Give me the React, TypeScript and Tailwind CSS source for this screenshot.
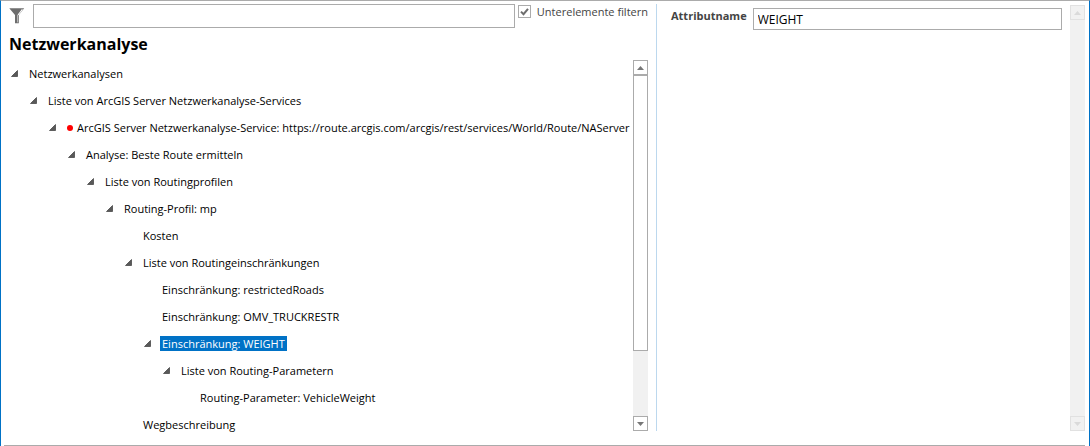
import { useState } from "react";
import clsx from "clsx";

type TreeNode = {
  label: string;
  marked?: boolean;
  children?: TreeNode[];
};

const tree: TreeNode[] = [
  {
    label: "Netzwerkanalysen",
    children: [
      {
        label: "Liste von ArcGIS Server Netzwerkanalyse-Services",
        children: [
          {
            label:
              "ArcGIS Server Netzwerkanalyse-Service: https://route.arcgis.com/arcgis/rest/services/World/Route/NAServer",
            marked: true,
            children: [
              {
                label: "Analyse: Beste Route ermitteln",
                children: [
                  {
                    label: "Liste von Routingprofilen",
                    children: [
                      {
                        label: "Routing-Profil: mp",
                        children: [
                          { label: "Kosten" },
                          {
                            label: "Liste von Routingeinschränkungen",
                            children: [
                              { label: "Einschränkung: restrictedRoads" },
                              { label: "Einschränkung: OMV_TRUCKRESTR" },
                              {
                                label: "Einschränkung: WEIGHT",
                                children: [
                                  {
                                    label: "Liste von Routing-Parametern",
                                    children: [{ label: "Routing-Parameter: VehicleWeight" }]
                                  }
                                ]
                              }
                            ]
                          },
                          { label: "Wegbeschreibung" }
                        ]
                      }
                    ]
                  }
                ]
              }
            ]
          }
        ]
      }
    ]
  }
];

function TreeItem({
  node,
  selected,
  onSelect
}: {
  node: TreeNode;
  selected: string;
  onSelect: (label: string) => void;
}) {
  const [open, setOpen] = useState(true);
  const isSelected = node.label === selected;

  return (
    <li role="treeitem" aria-selected={isSelected} aria-expanded={node.children ? open : undefined}>
      <div className="flex h-[27px] items-center whitespace-nowrap">
        {node.children ? (
          <button
            type="button"
            aria-label={node.label}
            onClick={() => setOpen(!open)}
            className="flex h-4 w-[18px] shrink-0 items-center pl-0.5"
          >
            <svg width="7" height="7" viewBox="0 0 7 7" className={clsx(!open && "-rotate-45")}>
              <path d="M6.5 0.5V6.5H0.5Z" fill="#595959" stroke="#3c3c3c" strokeWidth="0.7" />
            </svg>
          </button>
        ) : (
          <span className="w-[18px] shrink-0" />
        )}
        {node.marked && <span className="mx-0.5 size-1.5 shrink-0 rounded-full bg-[#ff0000]" />}
        <button
          type="button"
          onClick={() => onSelect(node.label)}
          className={clsx("px-0.5 leading-[15px]", isSelected && "bg-[#0072c6] text-white")}
        >
          {node.label}
        </button>
      </div>
      {node.children && open && (
        <ul role="group" className="pl-[19px]">
          {node.children.map((child) => (
            <TreeItem key={child.label} node={child} selected={selected} onSelect={onSelect} />
          ))}
        </ul>
      )}
    </li>
  );
}

function ScrollButton({ direction, disabled }: { direction: "up" | "down"; disabled?: boolean }) {
  return (
    <button
      type="button"
      disabled={disabled}
      aria-label={direction === "up" ? "Nach oben" : "Nach unten"}
      className={clsx(
        "flex size-[15px] shrink-0 items-center justify-center border",
        disabled ? "border-[#e1e1e1] bg-[#f1f1f1] text-[#dadada]" : "border-[#ababab] bg-white text-[#777777]"
      )}
    >
      <svg width="7" height="4" viewBox="0 0 7 4" fill="currentColor">
        <path d={direction === "up" ? "M3.5 0L7 4H0Z" : "M0 0H7L3.5 4Z"} />
      </svg>
    </button>
  );
}

function ScrollBar({ disabled }: { disabled?: boolean }) {
  return (
    <div className="flex w-[15px] shrink-0 flex-col bg-[#f1f1f1]">
      <ScrollButton direction="up" disabled={disabled} />
      <div className="min-h-0 flex-1">
        {!disabled && <div className="h-[81%] border border-[#ababab] bg-white" />}
      </div>
      <ScrollButton direction="down" disabled={disabled} />
    </div>
  );
}

function FilterIcon() {
  return (
    <svg width="16" height="16" viewBox="0 0 16 16" className="shrink-0">
      <path d="M0.3 0.3H15.2L9.8 7V15.3H6V7Z" fill="#6d6d6d" />
      <path d="M13.4 1.4L9 7" fill="none" stroke="#ffffff" strokeWidth="1.1" />
      <path d="M8.5 7V14.4" fill="none" stroke="#ffffff" strokeWidth="0.5" />
    </svg>
  );
}

export default function App() {
  const [filter, setFilter] = useState("");
  const [filterChildren, setFilterChildren] = useState(true);
  const [selected, setSelected] = useState("Einschränkung: WEIGHT");
  const [attributeName, setAttributeName] = useState("WEIGHT");

  return (
    <div className="flex h-screen flex-col border-x border-t border-x-[#0072c6] border-t-[#ababab] bg-white font-['Open_Sans','Noto_Sans',sans-serif] text-[11px] text-black">
      <main className="grid min-h-0 flex-1 grid-cols-[655fr_433fr] grid-rows-[minmax(0,1fr)] pt-[3px] pb-3.5">
        <section className="flex min-w-0 flex-col pr-2">
          <div className="flex items-start pl-2">
            <div className="pt-1">
              <FilterIcon />
            </div>
            <input
              type="text"
              aria-label="Filter"
              value={filter}
              onChange={(e) => setFilter(e.target.value)}
              className="ml-2 h-6 min-w-0 flex-1 border border-[#ababab] px-1 text-xs outline-none"
            />
            <label className="ml-[3px] flex shrink-0 items-center gap-1.5 text-[#444444]">
              <span className="grid size-[13px]">
                <input
                  type="checkbox"
                  checked={filterChildren}
                  onChange={(e) => setFilterChildren(e.target.checked)}
                  className="peer col-start-1 row-start-1 size-[13px] appearance-none border border-[#ababab] bg-white"
                />
                <svg
                  viewBox="0 0 13 13"
                  className="pointer-events-none invisible col-start-1 row-start-1 size-[13px] peer-checked:visible"
                >
                  <path d="M3 6.6L5.5 9.2L10 3.8" fill="none" stroke="#6d6d6d" strokeWidth="2" />
                </svg>
              </span>
              <span className="leading-[15px]">Unterelemente filtern</span>
            </label>
          </div>
          <h1 className="pl-2 text-base leading-8 font-bold">Netzwerkanalyse</h1>
          <div className="flex min-h-0 flex-1">
            <ul role="tree" className="-mb-1 min-w-0 flex-1 overflow-hidden pl-2">
              {tree.map((node) => (
                <TreeItem key={node.label} node={node} selected={selected} onSelect={setSelected} />
              ))}
            </ul>
            <ScrollBar />
          </div>
        </section>

        <section className="flex min-w-0 border-l border-[#bcd8ee] pr-1">
          <div className="flex min-w-0 flex-1 items-start pt-1 pl-3.5">
            <label htmlFor="attribute-name" className="shrink-0 leading-[15px] font-bold text-[#444444]">
              Attributname
            </label>
            <input
              id="attribute-name"
              type="text"
              value={attributeName}
              onChange={(e) => setAttributeName(e.target.value)}
              className="ml-1.5 h-[22px] min-w-0 flex-1 border border-[#ababab] px-1 text-xs outline-none"
            />
          </div>
          <div className="ml-2 flex pt-px">
            <ScrollBar disabled />
          </div>
        </section>
      </main>
      <footer className="mr-1 ml-[3px] border-b border-[#ababab]" />
    </div>
  );
}
